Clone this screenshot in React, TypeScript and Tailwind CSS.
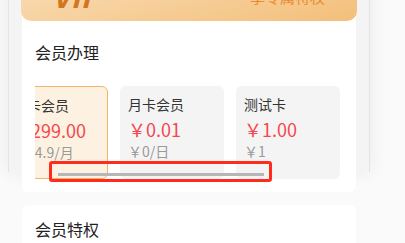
import React, { useLayoutEffect, useRef } from 'react';

const plans = [
  { name: '年卡会员', price: '￥299.00', unit: '￥24.9/月', selected: true },
  { name: '月卡会员', price: '￥0.01', unit: '￥0/日' },
  { name: '测试卡', price: '￥1.00', unit: '￥1' },
  { name: '季卡会员', price: '￥79.00', unit: '￥26.3/月' },
];

function PlanCard({ name, price, unit, selected }: { name: string; price: string; unit: string; selected?: boolean }) {
  return (
    <div
      className={`shrink-0 w-[104px] h-[93px] rounded-[6px] px-[8px] pt-[8px] ${
        selected ? 'bg-[#fdf2e2] border-[1.5px] border-[#f2b36d]' : 'bg-[#f4f4f4]'
      }`}
    >
      <div className="text-[14px] leading-[20px] text-[#333] whitespace-nowrap">{name}</div>
      <div className="mt-[3px] text-[18px] leading-[24px] text-[#f5474f] whitespace-nowrap">{price}</div>
      <div className="text-[14px] leading-[20px] text-[#999] whitespace-nowrap">{unit}</div>
    </div>
  );
}

export default function App() {
  const scroller = useRef<HTMLDivElement>(null);

  // carrusel ya desplazado un poco, como en la captura
  useLayoutEffect(() => {
    if (scroller.current) scroller.current.scrollLeft = 31;
  }, []);

  return (
    <div
      className="h-screen overflow-hidden bg-[#fafafa]"
      style={{ fontFamily: '"Noto Sans CJK SC", "Noto Sans", sans-serif' }}
    >
      <div className="ml-[8px] w-[362px] h-full bg-[#f4f4f4] border-x border-[#e4e4e4] shadow-[0_0_18px_rgba(0,0,0,0.07)] px-[13px]">
        {/* Tarjeta de membresía */}
        <div className="bg-white rounded-[6px] px-[13px] pb-[13px]">
          <div className="-mx-[14px] -mt-[71px] h-[92px] rounded-b-[10px] bg-linear-to-br from-[#fbe7c9] to-[#f3bf7a] flex items-end justify-between pl-[31px] pr-[32px] pb-[16px]">
            <span className="text-[30px] leading-none font-bold italic text-[#d3761d] -mb-[5px]">VIP</span>
            <span className="text-[15px] leading-none text-[#ea8b2e] mb-[1px]">享专属特权</span>
          </div>

          <div className="mt-[20px] text-[16px] leading-[22px] text-[#222]">会员办理</div>

          <div className="relative mt-[23px]">
            <div
              ref={scroller}
              className="flex gap-[12px] overflow-x-auto [scrollbar-width:none] [&::-webkit-scrollbar]:hidden"
            >
              {plans.map((p) => (
                <PlanCard key={p.name} {...p} />
              ))}
            </div>
            <div className="absolute left-[23px] top-[87px] w-[206px] h-[3px] bg-[#b7b7b7]" />
            <div className="absolute left-[14px] top-[75px] w-[223px] h-[21px] border-[3px] border-[#ff2b1c] rounded-[3px]" />
          </div>
        </div>

        {/* Privilegios */}
        <div className="mt-[13px] bg-white rounded-[6px] px-[13px] pt-[13px] h-[120px]">
          <div className="text-[16px] leading-[22px] text-[#222]">会员特权</div>
        </div>
      </div>
    </div>
  );
}
